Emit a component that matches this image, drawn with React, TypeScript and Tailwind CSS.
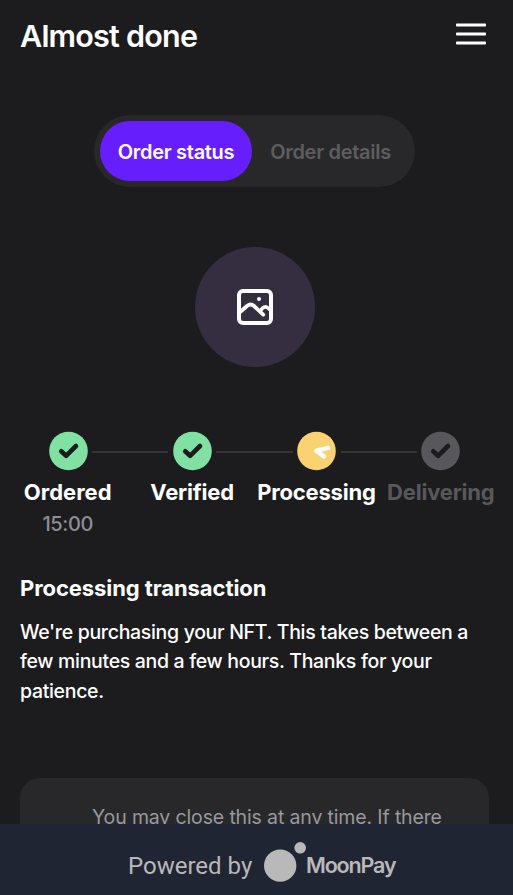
import type { ReactNode } from "react";

function Check() {
  return <path d="M12.2 20.2 L17.1 24.8 L27 15" stroke="#1c1c1e" strokeWidth="4.6" />;
}

function Spinner() {
  return <path d="M31.2 16.8 L19.2 19.7 L27 25.4" stroke="#fff" strokeWidth="4.4" />;
}

function Dot({ color, children }: { color: string; children: ReactNode }) {
  return (
    <svg width="39" height="40" viewBox="0 0 39 40" className="shrink-0" fill="none" strokeLinecap="round" strokeLinejoin="round">
      <circle cx="19.5" cy="20" r="19.3" fill={color} />
      {children}
    </svg>
  );
}

function Line() {
  return <div className="mx-[4.5px] mt-0.5 h-0.5 flex-1 bg-[#343436]" />;
}

export default function App() {
  return (
    <div className="flex h-[895px] w-[513px] flex-col overflow-hidden bg-[#1c1c1e] font-['Inter',sans-serif] text-white">
      <header className="flex h-[72px] shrink-0 items-center justify-between pr-[27px] pl-5">
        <h1 className="text-[30.5px] leading-none font-semibold tracking-[-0.78px] whitespace-nowrap">Almost done</h1>
        <svg width="30" height="22" viewBox="0 0 30 22" className="-mt-1" aria-label="Menu">
          <g fill="#fff">
            <rect y="0.5" width="30" height="3" rx="0.8" />
            <rect y="9.5" width="30" height="3" rx="0.8" />
            <rect y="18.5" width="30" height="3" rx="0.8" />
          </g>
        </svg>
      </header>

      <nav className="mt-[43px] ml-[94px] flex h-[72px] w-[321px] shrink-0 rounded-[36px] bg-[#28282a] p-1.5 text-[20px] font-semibold whitespace-nowrap">
        <button className="flex w-[152px] items-center justify-center rounded-[30px] bg-[#671efc] pt-0.5 tracking-[-0.3px]">Order status</button>
        <button className="flex flex-1 items-center justify-center pt-0.5 tracking-[-0.3px] text-[#5d5d61]">Order details</button>
      </nav>

      <div className="mt-[60px] ml-[195px] flex size-[120px] shrink-0 items-center justify-center rounded-full bg-[#352e40]">
        <svg width="36" height="36" viewBox="0 0 36 36" fill="none" stroke="#fff" strokeWidth="4" strokeLinecap="round" strokeLinejoin="round">
          <rect x="2" y="2" width="32" height="32" rx="4" />
          <path d="M2.5 23.5 L10.3 16.8 Q13.8 14 17 17 L26.2 25.6" strokeWidth="3.8" />
          <path d="M23.6 21.2 L25.6 19.2 Q28.4 16.8 31 19 L33.5 21.2" strokeWidth="3.6" />
          <circle cx="22" cy="10" r="2" fill="#fff" stroke="none" />
        </svg>
      </div>

      <section className="mt-16 shrink-0">
        <div className="mr-[52.5px] ml-[48.5px] flex items-center">
          <Dot color="#80e1a2"><Check /></Dot>
          <Line />
          <Dot color="#80e1a2"><Check /></Dot>
          <Line />
          <Dot color="#fad271"><Spinner /></Dot>
          <Line />
          <Dot color="#58585c"><Check /></Dot>
        </div>
        <div className="mr-[10px] ml-[5.5px] grid grid-cols-4 text-center text-[22px] leading-[28px] font-bold tracking-[-0.2px] whitespace-nowrap">
          <div className="pt-[7px] tracking-normal">
            Ordered
            <div className="mt-1 text-[20px] font-medium tracking-[-0.4px] text-[#8d8d93]">15:00</div>
          </div>
          <div className="pt-[7px]">Verified</div>
          <div className="pt-[7px]">Processing</div>
          <div className="pt-[7px] text-[#58585c]">Delivering</div>
        </div>
      </section>

      <section className="mt-[36px] shrink-0 pl-5">
        <h2 className="text-[22px] leading-[28px] font-bold tracking-[-0.08px]">Processing transaction</h2>
        <p className="mt-[15.5px] text-[19.5px] leading-[29.5px] font-medium tracking-[-0.32px] whitespace-nowrap">
          We're purchasing your NFT. This takes between a
          <br />
          few minutes and a few hours. Thanks for your
          <br />
          patience.
        </p>
      </section>

      <div className="mx-5 mt-auto mr-6 h-[46px] shrink-0 overflow-hidden rounded-t-[20px] bg-[#28282a] pt-[25px] pl-[72px] text-[19.5px] leading-[29px] tracking-[-0.14px] whitespace-nowrap text-[#98989e]">
        You may close this at any time. If there
      </div>

      <footer className="flex h-[71px] shrink-0 items-center bg-[#202534] pt-[13px] pl-32 text-[#b9b9b9]">
        <span className="w-[136px] font-['Roboto',sans-serif] text-[24px] leading-none whitespace-nowrap">Powered by</span>
        <svg width="42" height="40" viewBox="0 0 42 40" className="-mt-2" fill="#b9b9b9">
          <circle cx="16.2" cy="23.6" r="16.2" />
          <circle cx="36.2" cy="5.8" r="5.8" />
        </svg>
        <span className="text-[21.5px] leading-none font-semibold tracking-[-1.15px]">MoonPay</span>
      </footer>
    </div>
  );
}
